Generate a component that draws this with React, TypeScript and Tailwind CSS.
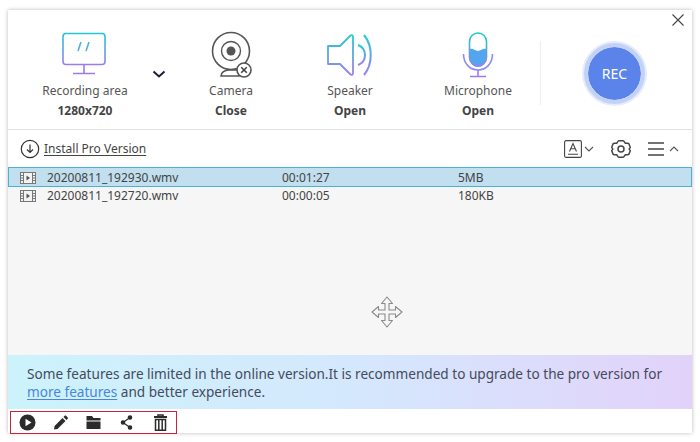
import { Fragment } from 'react'

const MonitorIcon = () => (
  <svg width="48" height="46" viewBox="0 0 48 46" fill="none">
    <defs>
      <linearGradient id="mon" x1="0" y1="0" x2="0" y2="1">
        <stop offset="0" stopColor="#1fc8d8" />
        <stop offset="1" stopColor="#9a7cf0" />
      </linearGradient>
    </defs>
    <rect x="2" y="1.5" width="42" height="31" rx="3" stroke="url(#mon)" strokeWidth="1.6" />
    <path d="M17 19l3-9M25 19l3-9" stroke="#4fb4dc" strokeWidth="1.6" />
    <path d="M23 33v8M12 41.5h22" stroke="#9a7cf0" strokeWidth="1.6" />
  </svg>
)

const CameraIcon = () => (
  <svg width="44" height="48" viewBox="0 0 44 48">
    <circle cx="22" cy="20" r="18.500" fill="none" stroke="#555" strokeWidth="1.6" />
    <circle cx="22" cy="20" r="9.500" fill="none" stroke="#555" strokeWidth="1.4" />
    <circle cx="22" cy="20" r="4.500" fill="#555" />
    <path d="M12 45c0-3 3-6 8-6h10v6z" fill="none" stroke="#555" strokeWidth="1.6" />
    <circle cx="35" cy="39" r="7" fill="#fff" stroke="#555" strokeWidth="1.6" />
    <path d="M32.200 36.200l5.600 5.600M37.800 36.200l-5.600 5.600" stroke="#444" strokeWidth="1.6" />
  </svg>
)

const SpeakerIcon = () => (
  <svg width="48" height="44" viewBox="0 0 48 44" fill="none">
    <defs>
      <linearGradient id="spk" x1="0" y1="0" x2="0" y2="1">
        <stop offset="0" stopColor="#1fcfd0" />
        <stop offset="1" stopColor="#a07cf2" />
      </linearGradient>
    </defs>
    <path d="M2 13h12L24 3c1.500-1.500 3-1 3 1v36c0 2-1.500 2.500-3 1L14 31H2z" stroke="url(#spk)" strokeWidth="1.8" strokeLinejoin="round" />
    <path d="M32 12c5 2 7 6 7 10s-2 8-7 10" stroke="url(#spk)" strokeWidth="2" />
    <path d="M38 2c9 11 9 29 0 40" stroke="url(#spk)" strokeWidth="2" />
  </svg>
)

const MicIcon = () => (
  <svg width="32" height="46" viewBox="0 0 32 46" fill="none">
    <defs>
      <linearGradient id="mic" x1="0" y1="0" x2="0" y2="1">
        <stop offset="0" stopColor="#12cfc8" />
        <stop offset="1" stopColor="#9c7cf2" />
      </linearGradient>
    </defs>
    <path d="M8 17c3-1 5 2 8 2s5-3 8-2v10a8 8 0 0 1-16 0z" fill="#52a6ee" />
    <rect x="7.500" y="1" width="17" height="33" rx="8.500" stroke="url(#mic)" strokeWidth="1.600" />
    <path d="M1.500 22c0 9 6 16 14.500 16s14.500-7 14.500-16" stroke="#8f8cf0" strokeWidth="1.600" />
    <path d="M16 38v6M8 44.500h16" stroke="#9c7cf2" strokeWidth="1.600" />
  </svg>
)

const FileIcon = () => (
  <svg width="16" height="12" viewBox="0 0 16 12" fill="none" className="shrink-0">
    <rect x="0.500" y="0.500" width="15" height="11" fill="#f3f3f3" stroke="#777" />
    <path d="M3.500 0v12M12.500 0v12M0 3.500h3.500M0 6h3.500M0 8.500h3.500M12.500 3.500H16M12.500 6H16M12.500 8.500H16" stroke="#777" />
    <path d="M6.500 3.500v5l3.500-2.500z" fill="#555" />
  </svg>
)

const MoveCursor = () => (
  <svg width="32" height="32" viewBox="0 0 32 32" fill="#f6f6f6" stroke="#8a8a8a" strokeWidth="1.100" strokeLinejoin="round">
    <path d="M16 1l5.500 6.500h-3.500v6.500h6.500v-3.500L31 16l-6.500 5.500V18h-6.500v6.500h3.500L16 31l-5.500-6.500H14V18H7.500v3.500L1 16l6.500-5.500V14H14V7.500h-3.500z" />
  </svg>
)

const devices = [
  { label: 'Camera', value: 'Close', icon: <CameraIcon />, width: 'w-[106px]' },
  { label: 'Speaker', value: 'Open', icon: <SpeakerIcon />, width: 'w-[132px]' },
  { label: 'Microphone', value: 'Open', icon: <MicIcon />, width: 'w-[124px]' },
]

const files = [
  { name: '20200811_192930.wmv', time: '00:01:27', size: '5MB', active: true },
  { name: '20200811_192720.wmv', time: '00:00:05', size: '180KB', active: false },
]

const Device = ({ icon, label, value, width }: { icon: React.ReactNode; label: string; value: string; width: string }) => (
  <div className={`${width} flex flex-col items-center shrink-0`}>
    <div className="h-[48px] flex items-center justify-center">{icon}</div>
    <div className="mt-[4px] text-[12px] leading-[16px] text-[#555]">{label}</div>
    <div className="mt-[4px] text-[12px] leading-[16px] font-bold text-[#444]">{value}</div>
  </div>
)

const App = () => {
  return (
    <div className="w-[700px] h-[442px] bg-white pt-[10px] px-[8px] font-['Noto_Sans',sans-serif] overflow-hidden">
      <div className="relative w-[684px] h-[423px] bg-white flex flex-col shadow-[0_0_4px_rgba(0,0,0,0.28)]">
        <svg className="absolute right-[8px] top-[4px]" width="12" height="12" viewBox="0 0 12 12" stroke="#444" strokeWidth="1.100">
          <path d="M0.500 0.500l11 11M11.500 0.500l-11 11" />
        </svg>

        <div className="h-[120px] flex items-start pt-[21px] pl-[18px] border-b border-[#e2e2e2] shrink-0">
          <Device icon={<MonitorIcon />} label="Recording area" value="1280x720" width="w-[118px]" />
          <svg className="mt-[39px] ml-[8px] shrink-0" width="14" height="9" viewBox="0 0 14 9" fill="none" stroke="#1d1d3a" strokeWidth="2">
            <path d="M1.500 1.500L7 6.500l5.500-5" />
          </svg>
          <div className="w-[12px] shrink-0" />
          {devices.map((d) => (
            <Fragment key={d.label}>
              <Device {...d} />
            </Fragment>
          ))}
          <div className="w-px h-[64px] mt-[10px] bg-[#eeeeee] shrink-0" />
          <div className="ml-[43px] mt-[12px] w-[61px] h-[61px] shrink-0 rounded-full bg-[#5a84ea] border-[4px] border-[#c3d2f7] bg-clip-padding flex items-center justify-center text-white text-[14px] shadow-[0_0_0_2px_#e6ecfb]">
            REC
          </div>
        </div>

        <div className="h-[37px] flex items-center pl-[12px] shrink-0 bg-white">
          <svg width="20" height="20" viewBox="0 0 20 20" fill="none" stroke="#333" strokeWidth="1.200">
            <circle cx="10" cy="10" r="8.700" />
            <path d="M10 5.500v8M7 10.500l3 3 3-3" />
          </svg>
          <span className="ml-[4px] text-[12px] text-[#444] underline underline-offset-2">Install Pro Version</span>
          <div className="ml-auto flex items-center pr-[13px]">
            <svg width="18" height="18" viewBox="0 0 18 18" fill="none" stroke="#444" strokeWidth="1.100">
              <rect x="0.600" y="0.600" width="16.800" height="16.800" rx="1.500" />
              <path d="M5.500 11.500L9 3.500l3.500 8M6.800 8.800h4.400M4 14.300h10" />
            </svg>
            <svg className="ml-[2px]" width="10" height="6" viewBox="0 0 10 6" fill="none" stroke="#555" strokeWidth="1.100">
              <path d="M1 1l4 4 4-4" />
            </svg>
            <svg className="ml-[17px]" width="20" height="20" viewBox="0 0 20 20" fill="none" stroke="#444" strokeWidth="1.500">
              <path d="M7.800 1.800h4.400c1 0 1.400 2 2.300 2.400 1 .4 2.700-.6 3.300.4l1.400 3.400c.5.900-1 1-1 2s1.500 1.100 1 2l-1.400 3.400c-.6 1-2.300 0-3.300.4-.9.400-1.300 2.400-2.300 2.400H7.800c-1 0-1.400-2-2.300-2.400-1-.4-2.700.6-3.300-.4L.8 12c-.5-.9 1-1 1-2s-1.500-1.100-1-2l1.400-3.400c.6-1 2.300 0 3.300-.4.900-.4 1.300-2.400 2.300-2.400z" strokeLinejoin="round" />
              <circle cx="10" cy="10" r="3" />
            </svg>
            <svg className="ml-[17px]" width="16" height="14" viewBox="0 0 16 14" stroke="#444" strokeWidth="1.300">
              <path d="M0 1h16M0 7h16M0 13h16" />
            </svg>
            <svg className="ml-[5px]" width="10" height="6" viewBox="0 0 10 6" fill="none" stroke="#555" strokeWidth="1.100">
              <path d="M1 5l4-4 4 4" />
            </svg>
          </div>
        </div>

        <div className="flex-1 min-h-0 bg-[#f6f6f6] relative">
          {files.map((f) =>
            f.active ? (
              <div key={f.name} className="h-[20px] flex items-center pl-[11px] pt-[1px] text-[12px] text-[#444] bg-[#c1dfee] border border-[#49b1d6]">
                <FileIcon />
                <span className="ml-[11px] w-[235px]">{f.name}</span>
                <span className="w-[176px]">{f.time}</span>
                <span>{f.size}</span>
              </div>
            ) : (
              <div key={f.name} className="h-[18px] flex items-center pl-[12px] text-[12px] text-[#444]">
                <FileIcon />
                <span className="ml-[11px] w-[235px]">{f.name}</span>
                <span className="w-[176px]">{f.time}</span>
                <span>{f.size}</span>
              </div>
            ),
          )}
          <div className="absolute left-[363px] top-[129px]">
            <MoveCursor />
          </div>
        </div>

        <div className="h-[54px] shrink-0 pl-[19px] pt-[10px] text-[13.6px] leading-[18px] text-[#454a5c] bg-gradient-to-r from-[#ccf3fb] via-[#d4e8fd] to-[#e2d2fa]">
          <div className="whitespace-nowrap">Some features are limited in the online version.It is recommended to upgrade to the pro version for</div>
          <div className="whitespace-nowrap">
            <span className="text-[#4a86d8] underline underline-offset-2">more features</span> and better experience.
          </div>
        </div>

        <div className="h-[24px] shrink-0 bg-white relative">
          <div className="absolute left-[2px] top-[2px] w-[167px] h-[23px] border border-[#c8243c] flex items-center pl-[8px] gap-[16px] bg-white">
            <svg width="17" height="17" viewBox="0 0 17 17">
              <circle cx="8.500" cy="8.500" r="8" fill="#2b2b2b" />
              <path d="M6.500 4.800v7.400l6-3.700z" fill="#fff" />
            </svg>
            <svg width="17" height="17" viewBox="0 0 17 17" fill="#2b2b2b">
              <path d="M2 15.500l.6-3.500L10.500 4l3 3-8 7.900zM11.500 3l1.200-1.200c.4-.4 1-.4 1.400 0l1.600 1.600c.4.400.4 1 0 1.400L14.500 6z" />
            </svg>
            <svg width="17" height="15" viewBox="0 0 17 15" fill="#2b2b2b">
              <path d="M1.500 1h5.500l1.500 2h7v2.500h-14zM1.500 6.500h14V14h-14z" />
            </svg>
            <svg width="17" height="17" viewBox="0 0 17 17" fill="none" stroke="#2b2b2b" strokeWidth="1.200">
              <path d="M12 3.500L5 8.500l7 5" />
              <circle cx="12" cy="3.500" r="1.700" fill="#2b2b2b" />
              <circle cx="5" cy="8.500" r="1.700" fill="#2b2b2b" />
              <circle cx="12" cy="13.500" r="1.700" fill="#2b2b2b" />
            </svg>
            <svg width="15" height="17" viewBox="0 0 15 17" fill="none" stroke="#2b2b2b" strokeWidth="1.500" className="ml-[2px]">
              <path d="M1 3h13" strokeWidth="2" />
              <path d="M5 2V1h5v1" />
              <path d="M2.500 5.500h10v10.700h-10zM5.800 6v10M9.200 6v10" />
            </svg>
          </div>
        </div>
      </div>
    </div>
  )
}

export default App
